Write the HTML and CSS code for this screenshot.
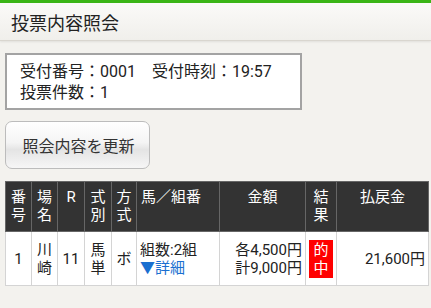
FILE: index.html
```html
<!DOCTYPE html>
<html lang="ja">
<head>
    <meta charset="UTF-8">
    <meta name="viewport" content="width=device-width, initial-scale=1.0">
    <title>投票内容照会</title>
    <link rel="stylesheet" href="styles.css">
</head>
<body>
    <header class="page-header">
        <h1>投票内容照会</h1>
    </header>

    <div class="content">
        <div class="info-box">
            <p>受付番号：0001　受付時刻：19:57</p>
            <p>投票件数：1</p>
        </div>

        <button class="refresh-btn" type="button">照会内容を更新</button>

        <table class="vote-table">
            <colgroup>
                <col class="c-no">
                <col class="c-place">
                <col class="c-race">
                <col class="c-type">
                <col class="c-method">
                <col class="c-horse">
                <col class="c-amount">
                <col class="c-result">
                <col class="c-payout">
            </colgroup>
            <thead>
                <tr>
                    <th>番<br>号</th>
                    <th>場<br>名</th>
                    <th>R</th>
                    <th>式<br>別</th>
                    <th>方<br>式</th>
                    <th class="left">馬／組番</th>
                    <th>金額</th>
                    <th>結<br>果</th>
                    <th>払戻金</th>
                </tr>
            </thead>
            <tbody>
                <tr>
                    <td class="center">1</td>
                    <td class="center">川<br>崎</td>
                    <td class="center">11</td>
                    <td class="center">馬<br>単</td>
                    <td class="center">ボ</td>
                    <td>組数:2組<br><a href="#" class="detail-link">▼詳細</a></td>
                    <td class="right">各4,500円<br>計9,000円</td>
                    <td class="center"><span class="hit">的<br>中</span></td>
                    <td class="right">21,600円</td>
                </tr>
            </tbody>
        </table>
    </div>
</body>
</html>
```

FILE: styles.css
```css
body {
    margin: 0;
    padding: 0;
    background-color: #f3f2ee;
    color: #222;
    font-family: Roboto, "Noto Sans CJK JP", sans-serif;
}
.page-header {
    border-top: 3px solid #3bb516;
    background: linear-gradient(#fbfaf8, #f0efeb);
    border-bottom: 1px solid #d9d6cf;
    box-shadow: 0 1px 2px rgba(0,0,0,0.08);
    height: 37px;
    display: flex;
    align-items: center;
}
.page-header h1 {
    margin: 0 0 0 11px;
    font-size: 18px;
    font-weight: normal;
    color: #222;
}
.content {
    padding: 12px 3px 0 5px;
}
.info-box {
    width: 280px;
    background: #fff;
    border: 2px solid #a3a3a3;
    padding: 6px 0 5px 13px;
    font-size: 16px;
    line-height: 21px;
}
.info-box p {
    margin: 0;
}
.refresh-btn {
    display: block;
    margin-top: 11px;
    width: 145px;
    height: 48px;
    border: 1px solid #bcbcbc;
    border-radius: 7px;
    background: linear-gradient(#ffffff 0%, #f4f4f4 45%, #e4e4e4 60%, #f6f6f6 100%);
    font-family: Roboto, "Noto Sans CJK JP", sans-serif;
    font-size: 16px;
    color: #333;
    padding: 0 0 0 2px;
}
.vote-table {
    margin-top: 12px;
    width: 423px;
    border-collapse: collapse;
    table-layout: fixed;
    font-size: 15px;
    line-height: 18px;
}
.c-no { width: 26px; }
.c-place { width: 26px; }
.c-race { width: 27px; }
.c-type { width: 27px; }
.c-method { width: 25px; }
.c-horse { width: 83px; }
.c-amount { width: 86px; }
.c-result { width: 31px; }
.c-payout { width: 92px; }
.vote-table th {
    background: #333;
    color: #fff;
    font-weight: normal;
    border: 1px solid #666;
    height: 43px;
    vertical-align: top;
    padding: 6px 0 0 0;
    text-align: center;
}
.vote-table th.left {
    text-align: left;
    padding-left: 4px;
}
.vote-table td {
    background: #fff;
    border: 1px solid #d4d4d4;
    height: 53px;
    padding: 0 3px;
    color: #222;
}
.vote-table td.center {
    text-align: center;
    padding: 0;
}
.vote-table td.right {
    text-align: right;
    padding-right: 3px;
}
.detail-link {
    color: #1a6fd0;
    text-decoration: none;
}
.hit {
    display: inline-block;
    background: #ff0000;
    color: #fff;
    width: 24px;
    padding: 1px 0;
    line-height: 18px;
}
```
